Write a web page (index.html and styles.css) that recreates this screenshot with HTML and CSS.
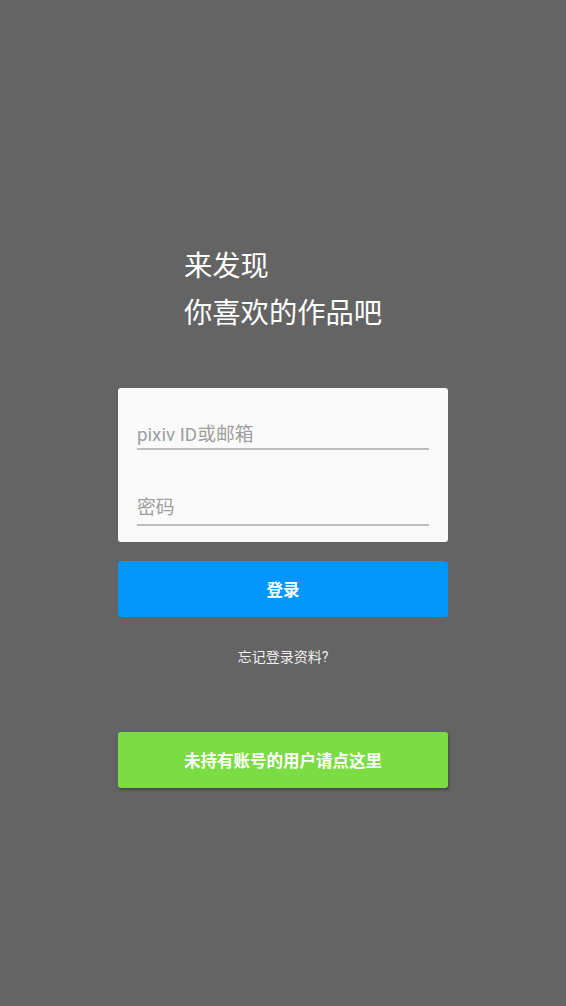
FILE: index.html
```html
<!DOCTYPE html>
<html lang="zh-CN">
<head>
<meta charset="utf-8">
<title>pixiv 登录</title>
<link rel="stylesheet" href="styles.css">
</head>
<body>
<main class="page">
  <h1 class="title">来发现<br>你喜欢的作品吧</h1>
  <form class="card">
    <div class="field"><span class="placeholder">pixiv ID或邮箱</span></div>
    <div class="field field-second"><span class="placeholder">密码</span></div>
  </form>
  <button class="btn btn-login" type="button">登录</button>
  <p class="forgot">忘记登录资料?</p>
  <button class="btn btn-register" type="button">未持有账号的用户请点这里</button>
</main>
</body>
</html>
```
FILE: styles.css
```css
html, body {
  margin: 0;
  padding: 0;
  background: #646464;
  height: 100%;
}
body {
  font-family: Roboto, "Noto Sans CJK SC", sans-serif;
}
.page {
  width: 330px;
  margin-left: 118px;
  padding-top: 243px;
  display: flex;
  flex-direction: column;
}
.title {
  margin: 0 0 0 66px;
  font-size: 28.3px;
  font-weight: 400;
  line-height: 47px;
  color: #ffffff;
  height: 145px;
}
.card {
  margin: 0;
  background: #fafafa;
  border-radius: 3px;
  padding: 35px 19px 16px;
  display: flex;
  flex-direction: column;
}
.field {
  border-bottom: 2px solid #bdbdbd;
  line-height: 24px;
  height: 24px;
  padding-bottom: 1px;
  font-size: 18.8px;
}
.field-second {
  margin-top: 46px;
  padding-bottom: 4px;
}
.placeholder {
  color: #9e9e9e;
}
.btn {
  border: none;
  border-radius: 3px;
  height: 56px;
  width: 330px;
  color: #ffffff;
  font-family: Roboto, "Noto Sans CJK SC", sans-serif;
  font-size: 16.5px;
  font-weight: 700;
  padding: 0;
}
.btn-login {
  margin-top: 19px;
  background: #0096fa;
}
.forgot {
  margin: 30px 0 0;
  text-align: center;
  font-size: 14px;
  line-height: 20px;
  color: #eeeeee;
}
.btn-register {
  margin-top: 65px;
  background: #7bdc43;
  box-shadow: 1px 2px 3px rgba(0, 0, 0, 0.3);
}
```
